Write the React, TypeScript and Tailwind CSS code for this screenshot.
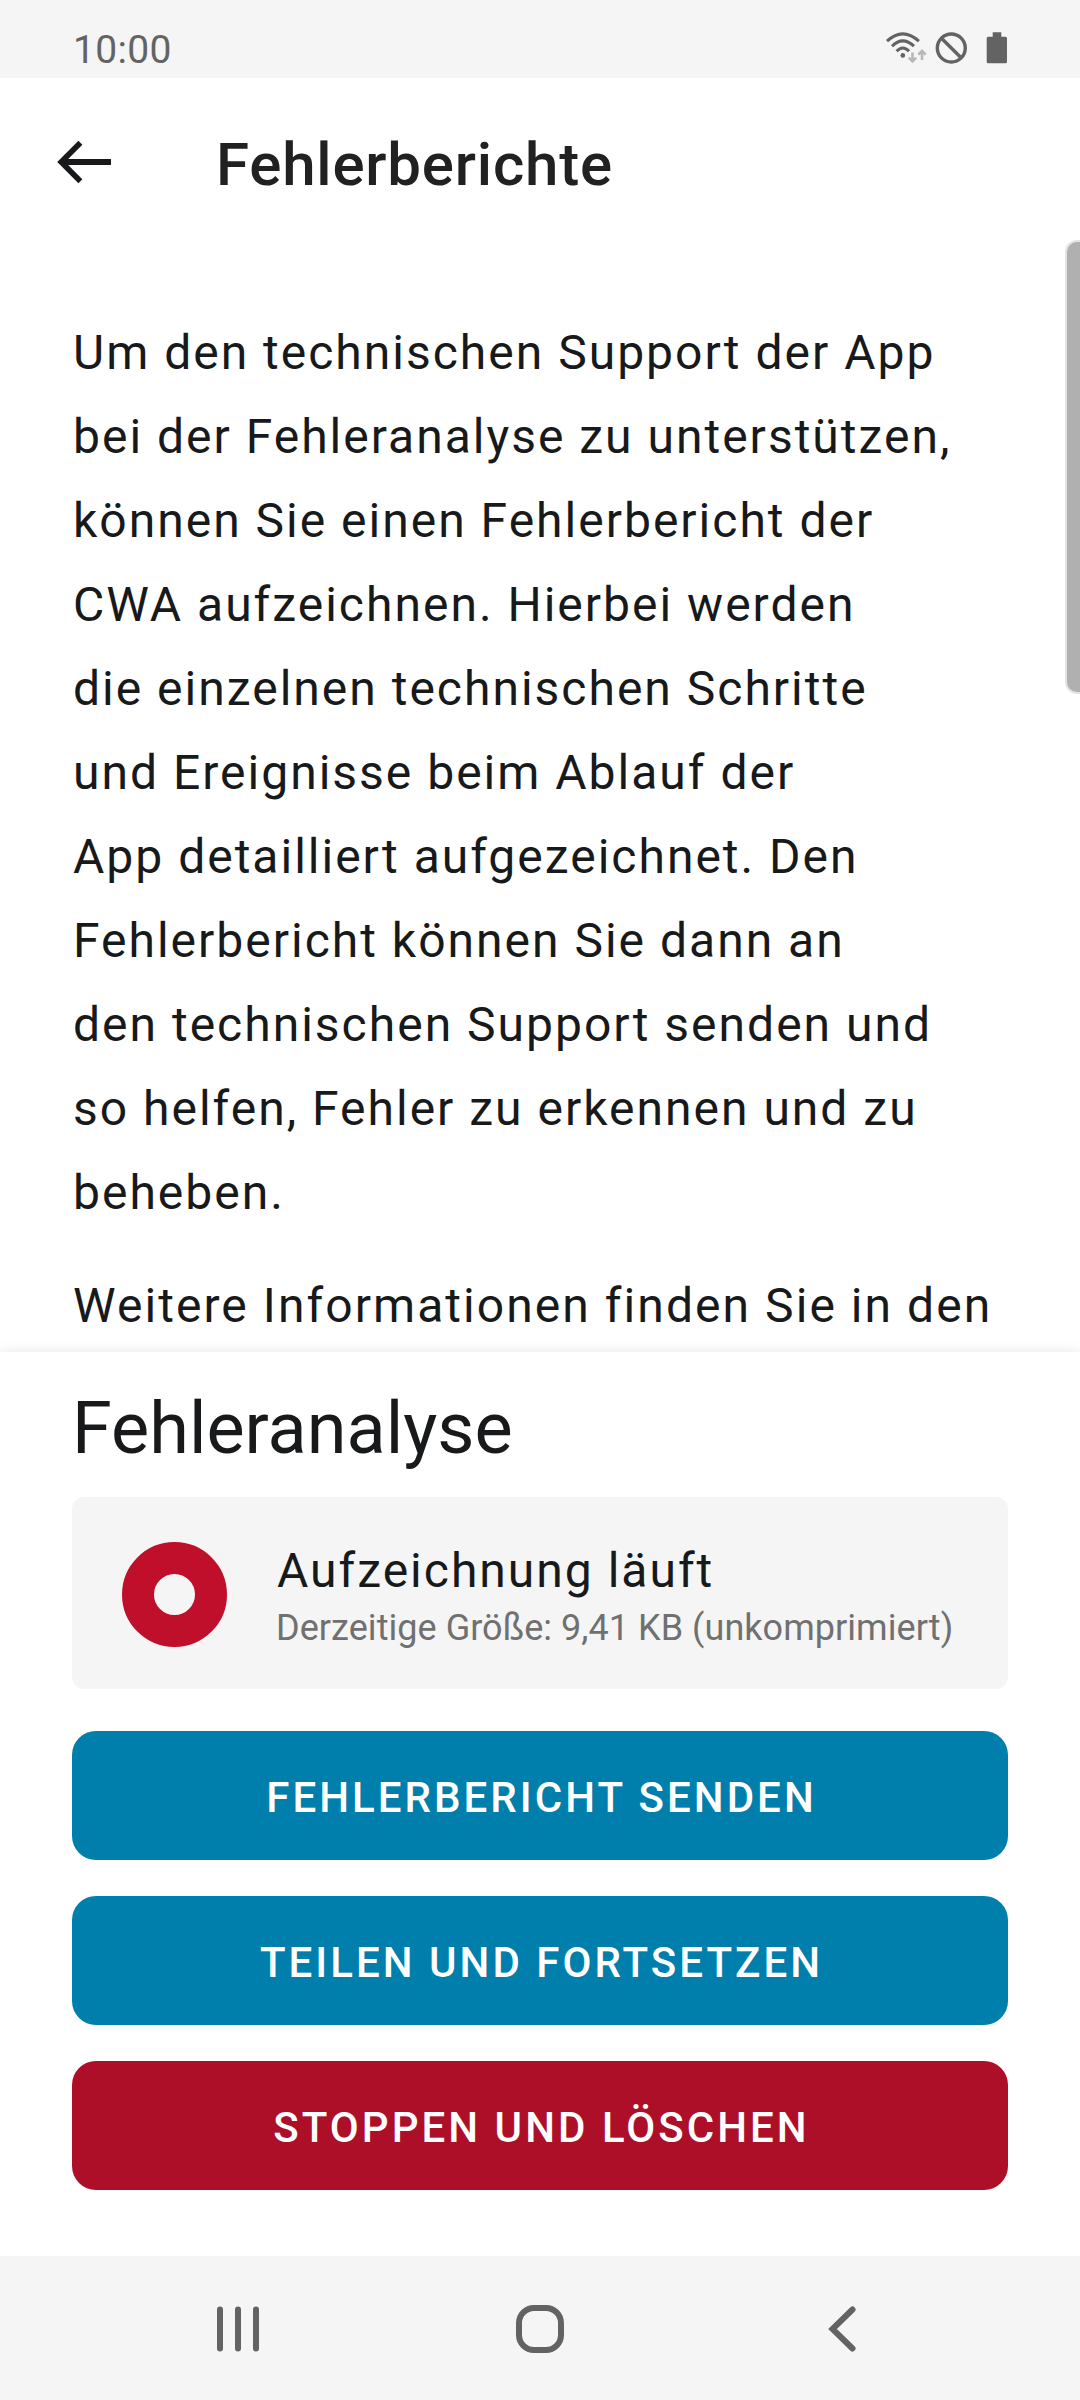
const paragraph = [
  'Um den technischen Support der App',
  'bei der Fehleranalyse zu unterstützen,',
  'können Sie einen Fehlerbericht der',
  'CWA aufzeichnen. Hierbei werden',
  'die einzelnen technischen Schritte',
  'und Ereignisse beim Ablauf der',
  'App detailliert aufgezeichnet. Den',
  'Fehlerbericht können Sie dann an',
  'den technischen Support senden und',
  'so helfen, Fehler zu erkennen und zu',
  'beheben.',
];

function StatusBar() {
  return (
    <div className="flex h-[78px] shrink-0 items-start justify-between bg-[#f5f5f5] pr-[72px] pl-[73px] text-[#636363]">
      <span className="mt-[27px] text-[39px] leading-[46px] tracking-[0.3px]">10:00</span>
      <svg className="h-[78px] w-[124px]" viewBox="884 0 124 78" fill="none">
        <g stroke="#636363" strokeWidth="3">
          <path d="M887 41.2Q902.7 26.5 918.9 41.2" />
          <path d="M892 46.2Q902.7 35.5 914 46.2" />
          <path d="M896.6 51.2Q902.7 44.6 909 51.2" />
          <circle cx="951.3" cy="48" r="14" strokeWidth="3.4" />
          <path d="M941.5 38.2L961.1 57.8" strokeWidth="3.4" />
        </g>
        <circle cx="902.8" cy="55.4" r="2.3" fill="#636363" />
        <g stroke="#b8b8b8" strokeWidth="2.6">
          <path d="M912.5 52.5V61.5M908.8 57.6L912.5 61.3L916.2 57.6" />
          <path d="M922 60V51M918.3 54.6L922 50.9L925.7 54.6" />
        </g>
        <path d="M992.7 32.3H1001.3V36.7H1005.5Q1007 36.7 1007 38.2V61.7Q1007 63.2 1005.5 63.2H988.2Q986.7 63.2 986.7 61.7V38.2Q986.7 36.7 988.2 36.7H992.7Z" fill="#636363" />
      </svg>
    </div>
  );
}

function Header() {
  return (
    <header className="flex h-40 shrink-0 items-start pl-[54px]">
      <svg className="mt-[60px] h-12 w-[60px]" viewBox="54 138 60 48" fill="none" stroke="#17191a">
        <path d="M80.4 142.8L61.2 162L80.4 181.2" strokeWidth="5.6" />
        <path d="M61 162H111" strokeWidth="6" />
      </svg>
      <h1 className="mt-[52px] ml-[102px] text-[60px] leading-[70px] font-medium tracking-[0.8px] text-[#212121]">Fehlerberichte</h1>
    </header>
  );
}

function Action({ label, danger }: { label: string; danger?: boolean }) {
  return (
    <button
      className={`h-[129px] shrink-0 rounded-[24px] pt-1 pl-[3px] text-[42px] leading-[50px] font-medium tracking-[3.04px] text-white ${danger ? 'bg-[#ad0f29]' : 'bg-[#007fad]'}`}
    >
      {label}
    </button>
  );
}

export default function App() {
  return (
    <div className="flex h-[2400px] w-[1080px] flex-col overflow-hidden bg-white font-[Roboto,sans-serif] text-[#17191a]">
      <StatusBar />
      <Header />

      <main className="relative h-[1114px] shrink-0 overflow-hidden pt-[73px] pl-[73px] text-[48px] leading-[84px] tracking-[2px] whitespace-nowrap">
        <p>
          {paragraph.map((line) => (
            <span key={line} className="block">{line}</span>
          ))}
        </p>
        <p className="mt-[29px] tracking-[2.06px]">Weitere Informationen finden Sie in den</p>
        <div className="absolute top-1 -right-1 h-[450px] w-[17px] rounded-l-[10px] bg-[#b0b0b0] ring-2 ring-[#e4e4e4]" />
      </main>

      <section className="relative flex h-[904px] shrink-0 flex-col bg-white px-[72px] pt-[35px] shadow-[0_0_12px_rgba(0,0,0,0.10)]">
        <h2 className="text-[72px] leading-[84px]">Fehleranalyse</h2>
        <div className="mt-[26px] flex h-48 shrink-0 items-start rounded-[12px] bg-[#f5f5f5] pl-[50px]">
          <div className="mt-[45px] size-[105px] rounded-full border-[32px] border-[#bf0f2b]" />
          <div className="mt-[46px] ml-[49px] whitespace-nowrap">
            <p className="pl-px text-[48px] leading-[56px] tracking-[2px]">Aufzeichnung läuft</p>
            <p className="mt-[8px] text-[36px] leading-[42px] tracking-[0.05px] text-[#707070]">Derzeitige Größe: 9,41 KB (unkomprimiert)</p>
          </div>
        </div>
        <div className="mt-[42px] flex flex-col gap-9">
          <Action label="FEHLERBERICHT SENDEN" />
          <Action label="TEILEN UND FORTSETZEN" />
          <Action label="STOPPEN UND LÖSCHEN" danger />
        </div>
      </section>

      <nav className="relative h-36 shrink-0 bg-[#f5f5f5]">
        <svg className="h-36 w-full" viewBox="0 2256 1080 144" fill="none" stroke="#636363" strokeWidth="6" strokeLinecap="round">
          <path d="M220 2309.5V2348.5M238 2309.5V2348.5M256 2309.5V2348.5" />
          <rect x="519" y="2308" width="42" height="42" rx="15" />
          <path d="M852.5 2309.5L832.5 2329L852.5 2348.5" />
        </svg>
      </nav>
    </div>
  );
}
